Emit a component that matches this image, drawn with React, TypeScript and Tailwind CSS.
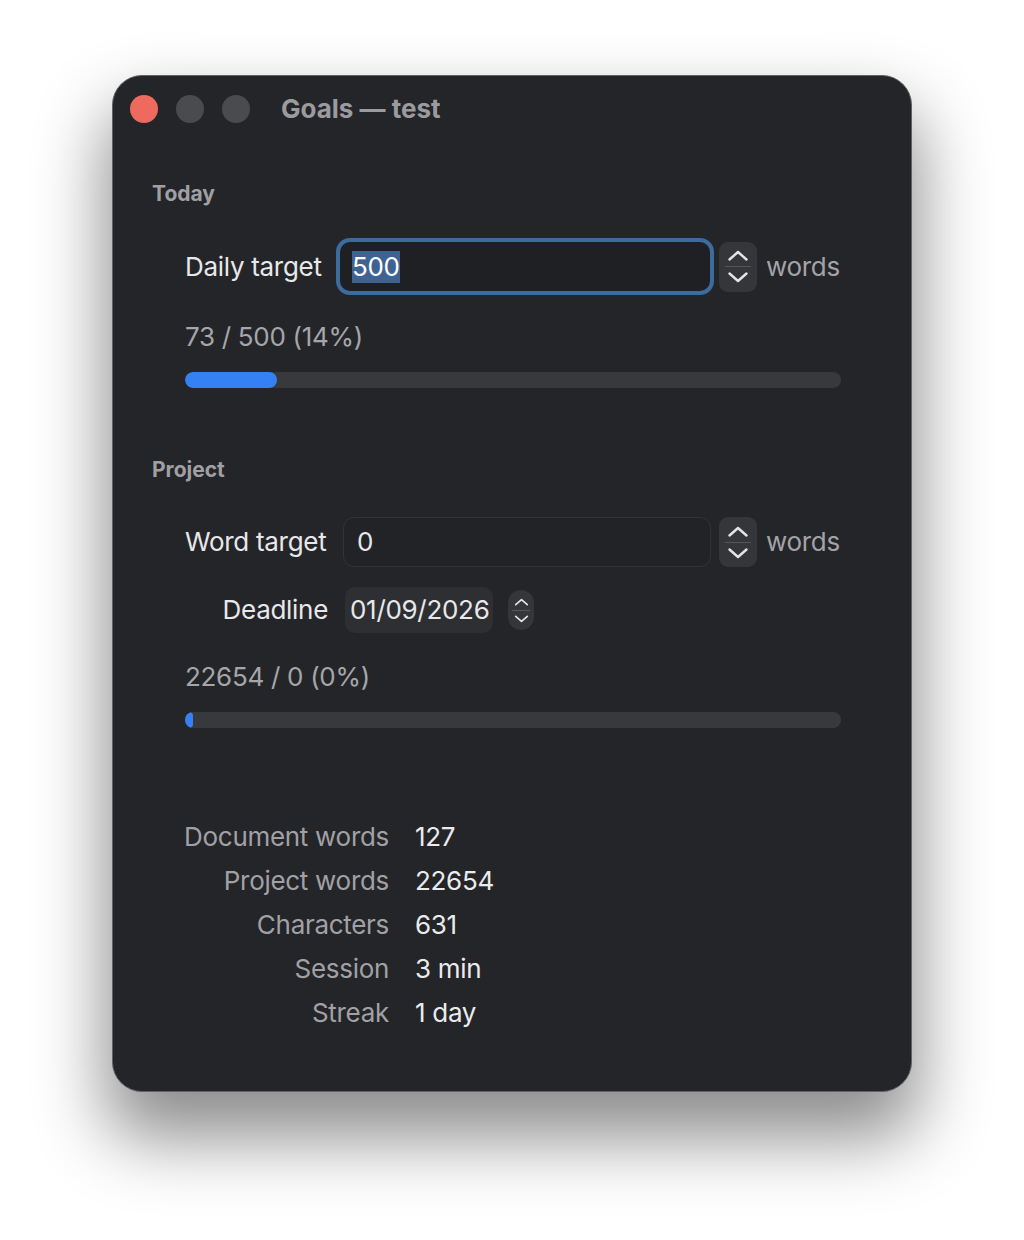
import React from 'react';

const font = { fontFamily: 'Inter, "Noto Sans", "Liberation Sans", sans-serif' };

function Chevron({ up, size = 22 }: { up?: boolean; size?: number }) {
  return (
    <svg width={size} height={Math.round(size / 2)} viewBox="0 0 22 11" fill="none" aria-hidden="true">
      <path
        d={up ? 'M2.5 9.5 11 2l8.5 7.5' : 'M2.5 1.5 11 9l8.5-7.5'}
        stroke="#e4e4e6"
        strokeWidth={2.4}
        strokeLinecap="round"
        strokeLinejoin="round"
      />
    </svg>
  );
}

function Stepper({ small }: { small?: boolean }) {
  if (small) {
    return (
      <div className="flex h-[40px] w-[26px] flex-col items-center justify-center gap-[4px] rounded-[13px] bg-[#35363a]">
        <Chevron up size={15} />
        <div className="h-px w-[18px] bg-[#55565a]" />
        <Chevron size={15} />
      </div>
    );
  }
  return (
    <div className="flex h-[50px] w-[38px] flex-col items-center justify-center gap-[5px] rounded-[9px] bg-[#35363a]">
      <Chevron up />
      <div className="h-px w-[26px] bg-[#55565a]" />
      <Chevron />
    </div>
  );
}

function Bar({ pct }: { pct: number }) {
  return (
    <div className="ml-[72px] h-[16px] w-[656px] overflow-hidden rounded-full bg-[#38393d]">
      <div className="h-full rounded-full bg-[#3680f6]" style={{ width: `max(${pct}%, 8px)` }} />
    </div>
  );
}

const stats: [string, string][] = [
  ['Document words', '127'],
  ['Project words', '22654'],
  ['Characters', '631'],
  ['Session', '3 min'],
  ['Streak', '1 day'],
];

export default function App() {
  return (
    <div className="h-[1240px] w-[1024px] bg-white pl-[112px] pt-[75px]" style={font}>
      <div className="h-[1017px] w-[800px] overflow-hidden rounded-[30px] border border-[#626266] bg-[#242529] text-[26px] tracking-[-0.3px] shadow-[0_40px_70px_6px_rgba(0,0,0,0.45)]">
        {/* title bar */}
        <div className="flex h-[65px] items-center pl-[17px]">
          <div className="h-[28px] w-[28px] rounded-full bg-[#ee6a5f]" />
          <div className="ml-[18px] h-[28px] w-[28px] rounded-full bg-[#4a4b4f]" />
          <div className="ml-[18px] h-[28px] w-[28px] rounded-full bg-[#4a4b4f]" />
          <div className="ml-[31px] whitespace-nowrap text-[26px] font-bold leading-none tracking-normal text-[#9b9b9f]">Goals — test</div>
        </div>

        {/* Today */}
        <div className="ml-[39px] mt-[40px] h-[26px] text-[21px] font-bold leading-[26px] tracking-normal text-[#a0a0a4]">Today</div>
        <div className="mt-[31px] flex h-[57px] items-center whitespace-nowrap">
          <div className="ml-[72px] w-[151px] shrink-0 leading-none text-[#e8e8ea]">Daily target</div>
          <div className="flex h-[57px] w-[378px] shrink-0 items-center rounded-[14px] border-[4px] border-[#3c6b9e] bg-[#1f2024] pl-[12px]">
            <span className="bg-[#3f6391] leading-[32px] text-white">500</span>
          </div>
          <div className="ml-[5px]">
            <Stepper />
          </div>
          <div className="ml-[9px] leading-none text-[#a3a3a7]">words</div>
        </div>
        <div className="ml-[72px] mt-[26px] h-[32px] leading-[32px] text-[#a6a6aa]">73 / 500 (14%)</div>
        <div className="mt-[19px]">
          <Bar pct={14} />
        </div>

        {/* Project */}
        <div className="ml-[39px] mt-[69px] h-[26px] text-[21px] font-bold leading-[26px] tracking-normal text-[#a0a0a4]">Project</div>
        <div className="mt-[34px] flex h-[50px] items-center whitespace-nowrap">
          <div className="ml-[72px] w-[158px] shrink-0 leading-none text-[#e8e8ea]">Word target</div>
          <div className="flex h-[50px] w-[368px] shrink-0 items-center rounded-[11px] border border-[#323337] bg-[#222327] pl-[13px]">
            <span className="leading-none text-[#e8e8ea]">0</span>
          </div>
          <div className="ml-[8px]">
            <Stepper />
          </div>
          <div className="ml-[9px] leading-none text-[#a3a3a7]">words</div>
        </div>
        <div className="mt-[20px] flex h-[46px] items-center whitespace-nowrap">
          <div className="w-[215px] shrink-0 text-right leading-none text-[#e8e8ea]">Deadline</div>
          <div className="ml-[17px] flex h-[46px] w-[148px] shrink-0 items-center overflow-hidden rounded-[10px] bg-[#2e2f33] pl-[5px]">
            <span className="leading-none text-[#e8e8ea]">01/09/2026</span>
          </div>
          <div className="ml-[15px]">
            <Stepper small />
          </div>
        </div>
        <div className="ml-[72px] mt-[28px] h-[32px] leading-[32px] text-[#a6a6aa]">22654 / 0 (0%)</div>
        <div className="mt-[19px]">
          <Bar pct={0} />
        </div>

        {/* stats */}
        <div className="mt-[87px] flex flex-col">
          {stats.map(([k, v]) => (
            <div key={k} className="flex h-[44px] items-center whitespace-nowrap leading-none">
              <div className="w-[276px] shrink-0 text-right text-[#a1a1a5]">{k}</div>
              <div className="ml-[26px] text-[#ebebed]">{v}</div>
            </div>
          ))}
        </div>
      </div>
    </div>
  );
}
